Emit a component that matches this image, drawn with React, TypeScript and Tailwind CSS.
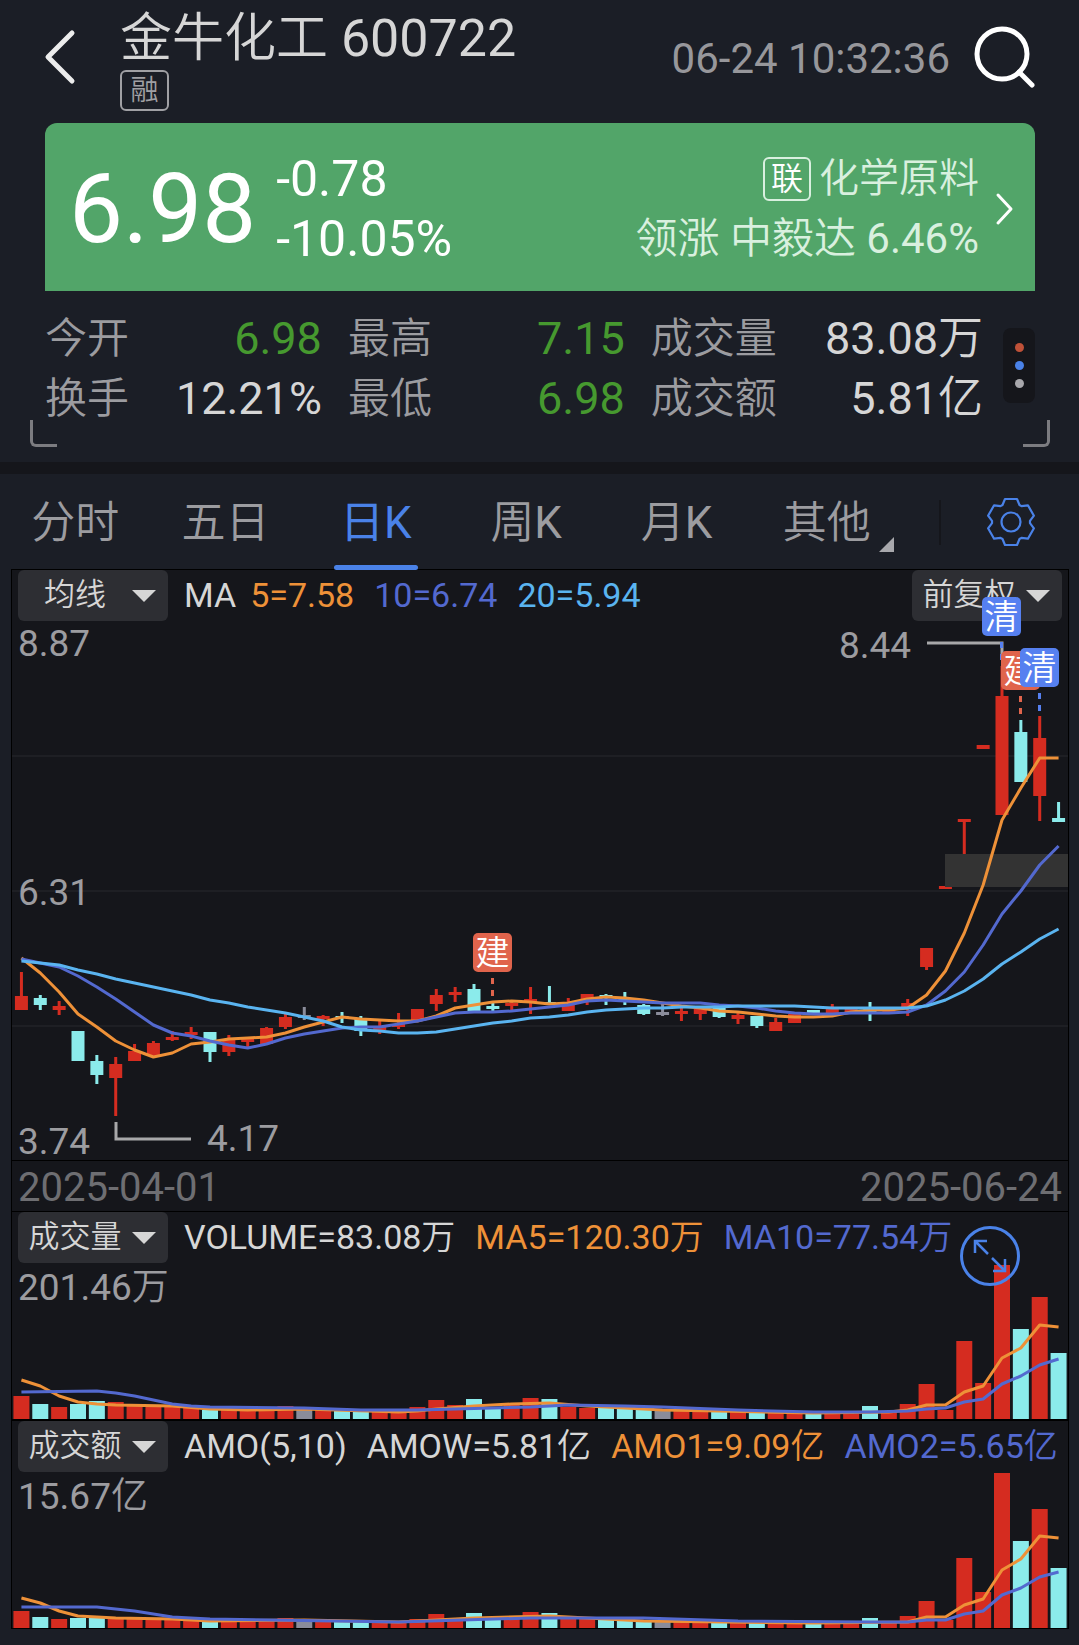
import React from 'react';

type Tone = 'up' | 'down' | 'flat';

const TONES: Record<string, Tone> = { r: 'up', c: 'down', g: 'flat' };

const TONE_FILL: Record<Tone, string> = {
  up: 'fill-[#d52c20]',
  down: 'fill-[#8bebeb]',
  flat: 'fill-[#8a8c9a]',
};

const CHART_WIDTH = 1056;
const COUNT = 56;
const STEP = CHART_WIDTH / COUNT;
const PRICE_TOP = 570;

const centerOf = (i: number) => (i + 0.5) * STEP;

// One letter per trading day: r = up, c = down, g = flat
const DAYS = 'rcrccrrrrrcrrrrgrccrrrrrccrrcrrcccgrrcrcrrcrrcrrrrrrrcrc';

// [high, body top, body bottom, low]
const CANDLES: [number, number, number, number][] = [
  [972, 996, 1010, 1010], [995, 998, 1005, 1010], [1001, 1006, 1010, 1015], [1031, 1031, 1061, 1061],
  [1055, 1061, 1075, 1084], [1057, 1064, 1078, 1116], [1044, 1051, 1061, 1061], [1041, 1043, 1056, 1058],
  [1031, 1037, 1040, 1041], [1027, 1032, 1035, 1039], [1032, 1032, 1052, 1062], [1035, 1039, 1052, 1056],
  [1039, 1039, 1042, 1047], [1027, 1028, 1044, 1044], [1014, 1017, 1027, 1029], [1007, 1015, 1018, 1020],
  [1015, 1016, 1019, 1026], [1012, 1016, 1018, 1023], [1016, 1019, 1031, 1036], [1021, 1027, 1030, 1034],
  [1013, 1024, 1027, 1029], [1009, 1009, 1020, 1020], [989, 995, 1004, 1011], [987, 992, 995, 1002],
  [984, 989, 1011, 1011], [1003, 1006, 1009, 1011], [1001, 1003, 1006, 1010], [987, 999, 1002, 1014],
  [986, 1002, 1004, 1004], [998, 1002, 1011, 1011], [994, 994, 999, 1005], [994, 995, 998, 1005],
  [992, 999, 1002, 1005], [1004, 1005, 1014, 1015], [1004, 1012, 1015, 1016], [1008, 1011, 1014, 1021],
  [1009, 1009, 1014, 1020], [1008, 1008, 1017, 1018], [1013, 1015, 1019, 1024], [1016, 1016, 1026, 1028],
  [1018, 1022, 1031, 1031], [1014, 1014, 1023, 1023], [1010, 1010, 1013, 1013], [1004, 1009, 1013, 1013],
  [1009, 1009, 1012, 1012], [1002, 1009, 1012, 1021], [1010, 1010, 1013, 1013], [999, 1003, 1008, 1016],
  [948, 948, 967, 970], [886, 886, 889, 889], [819, 819, 822, 855], [745, 745, 749, 749],
  [666, 696, 815, 815], [720, 732, 782, 782], [716, 738, 796, 821], [802, 818, 822, 822],
];

const MA5 = [
  958, 973, 992, 1014, 1027, 1041, 1050, 1057, 1053, 1044, 1042, 1039, 1038, 1037, 1033, 1027, 1022, 1017, 1019,
  1020, 1021, 1021, 1016, 1008, 1005, 1002, 1001, 1002, 1004, 1003, 999, 997, 998, 1000, 1003, 1006, 1008, 1011,
  1012, 1014, 1016, 1017, 1017, 1016, 1012, 1010, 1010, 1008, 995, 971, 933, 885, 820, 788, 758, 758,
];

const MA10 = [
  959, 963, 967, 976, 987, 999, 1012, 1025, 1033, 1036, 1041, 1045, 1048, 1044, 1038, 1034, 1031, 1028, 1027, 1027,
  1024, 1021, 1017, 1013, 1012, 1012, 1011, 1009, 1007, 1005, 1001, 1000, 1001, 1002, 1003, 1003, 1003, 1005, 1006,
  1008, 1011, 1013, 1014, 1014, 1013, 1013, 1013, 1012, 1005, 991, 972, 945, 914, 891, 865, 846,
];

const MA20 = [
  961, 963, 965, 970, 974, 979, 983, 987, 991, 995, 1000, 1003, 1007, 1010, 1013, 1017, 1021, 1027, 1030, 1031,
  1033, 1033, 1032, 1029, 1026, 1023, 1021, 1018, 1017, 1015, 1012, 1010, 1009, 1008, 1008, 1007, 1007, 1007, 1006,
  1006, 1006, 1006, 1007, 1008, 1008, 1008, 1008, 1008, 1006, 1000, 991, 979, 964, 952, 939, 929,
];

// Heights above the base line
const VOLUME = [
  23, 15, 12, 15, 18, 17, 13, 13, 12, 12, 9, 9, 9, 9, 13, 12, 9, 8, 8, 8, 8, 12, 19, 14, 20, 10, 16, 21, 20, 12, 11,
  12, 11, 10, 9, 9, 8, 7, 7, 6, 6, 6, 6, 5, 5, 13, 8, 15, 35, 9, 78, 36, 154, 90, 122, 66,
];
const VOLUME_MA5: [number, number][] = [
  [0, 39], [1, 33], [2, 23], [3, 17], [4, 15], [5, 14], [8, 13], [10, 10], [12, 9], [15, 10], [20, 7], [21, 8],
  [22, 10], [24, 13], [26, 15], [28, 16], [30, 13], [32, 11], [34, 9], [37, 8], [42, 6], [46, 7], [47, 9], [48, 14],
  [49, 14], [50, 27], [51, 33], [52, 61], [53, 71], [54, 94], [55, 92],
];
const VOLUME_MA10: [number, number][] = [
  [0, 27], [4, 28], [5, 26], [6, 23], [7, 19], [8, 15], [9, 13], [10, 12], [15, 11], [18, 9], [21, 9], [23, 10],
  [25, 11], [27, 12], [29, 14], [32, 13], [34, 12], [38, 9], [42, 7], [45, 7], [47, 8], [48, 10], [49, 11], [50, 17],
  [51, 20], [52, 35], [53, 43], [54, 54], [55, 60],
];

const AMOUNT = [
  17, 11, 9, 10, 12, 11, 9, 9, 9, 9, 7, 7, 7, 7, 10, 9, 7, 6, 6, 6, 6, 9, 14, 10, 15, 8, 12, 16, 15, 9, 9, 9, 8, 8,
  7, 7, 6, 5, 5, 5, 5, 5, 5, 4, 4, 10, 6, 12, 27, 8, 70, 36, 155, 87, 119, 60,
];
const AMOUNT_MA5: [number, number][] = [
  [0, 30], [1, 25], [2, 17], [3, 12], [4, 11], [5, 10], [8, 9], [10, 7], [15, 8], [20, 6], [22, 8], [24, 10],
  [28, 12], [31, 9], [33, 7], [42, 5], [47, 6], [48, 11], [49, 11], [50, 23], [51, 29], [52, 58], [53, 69], [54, 92],
  [55, 90],
];
const AMOUNT_MA10: [number, number][] = [
  [0, 21], [4, 21], [6, 17], [7, 14], [8, 11], [10, 9], [20, 6], [27, 10], [33, 10], [38, 7], [45, 6], [47, 6],
  [48, 8], [49, 8], [50, 14], [51, 17], [52, 33], [53, 40], [54, 51], [55, 56],
];

const STATS = [
  [
    { label: '今开', value: '6.98', green: true },
    { label: '换手', value: '12.21%', green: false },
  ],
  [
    { label: '最高', value: '7.15', green: true },
    { label: '最低', value: '6.98', green: true },
  ],
  [
    { label: '成交量', value: '83.08万', green: false },
    { label: '成交额', value: '5.81亿', green: false },
  ],
];

const TABS = ['分时', '五日', '日K', '周K', '月K', '其他'];

const linePoints = (values: number[]) => values.map((y, i) => `${centerOf(i)},${y - PRICE_TOP}`).join(' ');

const GEAR_POINTS = Array.from({ length: 6 })
  .flatMap((_, i) => {
    const a = (i * Math.PI) / 3;
    return [[-8.5, -17], [-6, -23], [6, -23], [8.5, -17]].map(
      ([x, y]) => `${25 + x * Math.cos(a) - y * Math.sin(a)},${25 + x * Math.sin(a) + y * Math.cos(a)}`
    );
  })
  .join(' ');

function PickList({ label, value }: { label: string; value: string }) {
  return (
    <div className="relative h-[51px] w-[150px] shrink-0">
      <select
        aria-label={label}
        className="h-full w-full appearance-none rounded-md bg-[#2d2e33] pr-9 text-center text-[31px] text-[#d6d6d6] outline-none"
      >
        <option>{value}</option>
      </select>
      <svg viewBox="0 0 24 12" className="pointer-events-none absolute right-3 top-5 h-3 w-6">
        <path d="M0 0H24L12 12Z" className="fill-[#d6d6d6]" />
      </svg>
    </div>
  );
}

function Marker({ x, y, text, sell }: { x: number; y: number; text: string; sell?: boolean }) {
  return (
    <g>
      <rect x={x} y={y} width={39} height={39} rx={5} className={sell ? 'fill-[#5680f0]' : 'fill-[#e0644c]'} />
      <text x={x + 19.5} y={y + 32} textAnchor="middle" className="fill-white text-[34px]">
        {text}
      </text>
      <path
        d={`M${x + 19.5} ${y + 45}v6m0 6v6`}
        strokeWidth={3}
        className={sell ? 'stroke-[#5680f0]' : 'stroke-[#e0644c]'}
      />
    </g>
  );
}

function PriceChart() {
  return (
    <svg
      viewBox={`0 51 ${CHART_WIDTH} 539`}
      className="pointer-events-none relative block w-full overflow-visible"
      role="img"
      aria-label="日K"
    >
      <path d={`M0 186H${CHART_WIDTH}M0 321H${CHART_WIDTH}M0 456H${CHART_WIDTH}`} strokeWidth={2} className="stroke-[#1e1f24]" />
      {CANDLES.map(([high, top, bottom, low], i) => (
        <g key={i} className={TONE_FILL[TONES[DAYS[i]]]}>
          <rect x={centerOf(i) - 1.5} y={high - PRICE_TOP} width={3} height={low - high} />
          <rect x={centerOf(i) - 6.5} y={top - PRICE_TOP} width={13} height={bottom - top} />
        </g>
      ))}
      <rect x={933} y={284} width={123} height={33} className="fill-[#333333]" />
      <g fill="none" strokeWidth={3} strokeLinejoin="round">
        <polyline points={linePoints(MA5)} className="stroke-[#ee9138]" />
        <polyline points={linePoints(MA10)} className="stroke-[#5369cf]" />
        <polyline points={linePoints(MA20)} className="stroke-[#5ab4f0]" />
      </g>
      <g fill="none" strokeWidth={3} className="stroke-[#a8a8aa]">
        <path d="M104 552V569H179" />
        <path d="M915 73H990V90" />
      </g>
      <g className="fill-[#9c9ca0] text-[37px]">
        <text x={6} y={86}>8.87</text>
        <text x={6} y={335}>6.31</text>
        <text x={6} y={584}>3.74</text>
        <text x={195} y={581}>4.17</text>
        <text x={827} y={88}>8.44</text>
      </g>
      <Marker x={461} y={363} text="建" />
      <Marker x={970} y={27} text="清" sell />
      <Marker x={989} y={81} text="建" />
      <Marker x={1008} y={78} text="清" sell />
    </svg>
  );
}

interface BarChartProps {
  bars: number[];
  short: [number, number][];
  long: [number, number][];
  max: string;
  label: string;
}

function BarChart({ bars, short, long, max, label }: BarChartProps) {
  const toPoints = (line: [number, number][]) => line.map(([i, h]) => `${centerOf(i)},${156 - h}`).join(' ');
  return (
    <svg viewBox={`0 0 ${CHART_WIDTH} 156`} className="block w-full" role="img" aria-label={label}>
      {bars.map((h, i) => (
        <rect key={i} x={centerOf(i) - 8} y={156 - h} width={16} height={h} className={TONE_FILL[TONES[DAYS[i]]]} />
      ))}
      <g fill="none" strokeWidth={3} strokeLinejoin="round">
        <polyline points={toPoints(short)} className="stroke-[#ee9138]" />
        <polyline points={toPoints(long)} className="stroke-[#5369cf]" />
      </g>
      <text x={6} y={37} className="fill-[#9c9ca0] text-[37px]">{max}</text>
    </svg>
  );
}

export default function App() {
  return (
    <main className="min-h-screen bg-[#1b1e26] pb-4 font-['Roboto','Noto_Sans_CJK_SC_DemiLight','Noto_Sans_CJK_SC',sans-serif] text-[#d6d6d6]">
      {/* Title bar */}
      <header className="mb-[10px] flex h-[113px] items-center pl-11 pr-[43px]">
        <button aria-label="返回" className="shrink-0">
          <svg viewBox="0 0 32 56" className="h-14 w-8" fill="none">
            <path d="M28 4L4 28L28 52" strokeWidth={5} strokeLinecap="round" strokeLinejoin="round" className="stroke-[#ececec]" />
          </svg>
        </button>
        <div className="ml-11 flex flex-col items-start pt-1.5">
          <h1 className="text-[52px] leading-[62px]">金牛化工 600722</h1>
          <span className="flex h-[41px] w-[49px] items-center justify-center rounded-md border-2 border-[#a0a0a4] text-[28px] leading-none text-[#a0a0a4]">
            融
          </span>
        </div>
        <time className="ml-auto mr-6 mt-1 text-[42px] leading-none text-[#97979b]">06-24 10:32:36</time>
        <button aria-label="搜索" className="shrink-0">
          <svg viewBox="0 0 62 62" className="size-[62px]" fill="none">
            <circle cx="28" cy="28" r="25" strokeWidth={5} className="stroke-white" />
            <path d="M45 46L58 59" strokeWidth={5} strokeLinecap="round" className="stroke-white" />
          </svg>
        </button>
      </header>

      {/* Quote */}
      <section className="ml-[45px] mr-11 flex h-[168px] items-center rounded-t-xl bg-[#52a569] pl-6 pr-5 pt-1 text-white">
        <div className="text-[96px] leading-none">6.98</div>
        <div className="ml-5 text-[50px] leading-[60px]">
          <div>-0.78</div>
          <div>-10.05%</div>
        </div>
        <a href="#industry" className="ml-auto flex items-center gap-4 text-[40px] leading-[60px] text-[#d9f0df]">
          <span className="flex flex-col items-end">
            <span className="flex items-center gap-2">
              <span className="flex h-[44px] w-12 items-center justify-center rounded-md border-2 border-[#d9f0df] text-[32px] leading-none text-white">
                联
              </span>
              化学原料
            </span>
            <span className="text-[42px]">领涨 中毅达 6.46%</span>
          </span>
          <svg viewBox="0 0 20 34" className="h-[34px] w-5" fill="none">
            <path d="M3 3L16 17L3 31" strokeWidth={3} strokeLinecap="round" strokeLinejoin="round" className="stroke-white" />
          </svg>
        </a>
      </section>

      <section className="relative flex h-[171px] items-start gap-5 pl-[45px] pr-11 pt-[18px]">
        <div className="grid flex-1 grid-cols-[5fr_5fr_6fr] gap-x-[26px]">
          {STATS.map((column, ci) => (
            <dl key={ci}>
              {column.map(item => (
                <div key={item.label} className="flex justify-between leading-[60px]">
                  <dt className="text-[42px] text-[#9c9ca0]">{item.label}</dt>
                  <dd className={`text-[45px] ${item.green ? 'text-[#46992f]' : 'text-[#d6d6d6]'}`}>{item.value}</dd>
                </div>
              ))}
            </dl>
          ))}
        </div>
        <button aria-label="更多" className="mt-[19px] flex h-[75px] w-8 flex-col items-center justify-center gap-[9px] rounded-lg bg-[#15161b]">
          <span className="size-[9px] rounded-full bg-[#bf5138]" />
          <span className="size-[9px] rounded-full bg-[#4a82e8]" />
          <span className="size-[9px] rounded-full bg-[#a8a8ac]" />
        </button>
        <span className="absolute bottom-[15px] left-[30px] h-[27px] w-[27px] rounded-bl-md border-b-3 border-l-3 border-[#7c7c80]" />
        <span className="absolute bottom-[15px] right-[29px] h-[27px] w-[27px] rounded-br-md border-b-3 border-r-3 border-[#7c7c80]" />
      </section>

      <div className="h-3 bg-[#15161b]" />

      {/* Period tabs */}
      <nav className="flex h-24 items-center">
        <div role="tablist" className="grid h-full w-[83.6%] grid-cols-6">
          {TABS.map(tab => {
            const active = tab === '日K';
            return (
              <button
                key={tab}
                role="tab"
                aria-selected={active}
                className={`relative flex items-center justify-center pt-0.5 text-[44px] ${
                  active ? "font-['Roboto','Noto_Sans_CJK_SC',sans-serif] text-[#4a82e8]" : 'text-[#9c9ca0]'
                }`}
              >
                {tab}
                {active && <span className="absolute bottom-0 h-[5px] w-[84px] rounded-full bg-[#4a82e8]" />}
                {tab === '其他' && (
                  <svg viewBox="0 0 15 15" className="absolute bottom-[18px] right-2 size-[15px]">
                    <path d="M15 0V15H0Z" className="fill-[#a8a8ac]" />
                  </svg>
                )}
              </button>
            );
          })}
        </div>
        <div className="ml-auto h-[45px] w-0.5 bg-[#15161b]" />
        <button aria-label="设置" className="ml-[45px] mr-[43px]">
          <svg viewBox="0 0 50 50" className="size-[50px] stroke-[#4a82e8]" fill="none" strokeWidth={2.2}>
            <polygon points={GEAR_POINTS} strokeLinejoin="round" />
            <circle cx="25" cy="25" r="9.5" />
          </svg>
        </button>
      </nav>

      {/* Charts */}
      <div className="pl-3 pr-[11px]">
        <div className="bg-[#15161b] outline-1 outline-black">
          <section>
            <div className="flex h-[51px] items-center px-1.5">
              <PickList label="指标" value="均线" />
              <div className="ml-4 flex whitespace-nowrap text-[34px]">
                <span>MA</span>
                <span className="ml-3.5 text-[#ee9138]">5=7.58</span>
                <span className="ml-5 text-[#5369cf]">10=6.74</span>
                <span className="ml-5 text-[#5ab4f0]">20=5.94</span>
              </div>
              <div className="ml-auto">
                <PickList label="复权" value="前复权" />
              </div>
            </div>
            <PriceChart />
          </section>

          <div className="flex h-[52px] items-center justify-between border-y border-black px-1.5 pt-1 text-[40px] leading-none text-[#6e6e72]">
            <time>2025-04-01</time>
            <time>2025-06-24</time>
          </div>

          <section className="relative border-b-2 border-black">
            <div className="flex h-[51px] items-center px-1.5">
              <PickList label="副图一" value="成交量" />
              <div className="ml-4 flex gap-5 whitespace-nowrap text-[34px]">
                <span>VOLUME=83.08万</span>
                <span className="text-[#ee9138]">MA5=120.30万</span>
                <span className="text-[#5369cf]">MA10=77.54万</span>
              </div>
            </div>
            <BarChart bars={VOLUME} short={VOLUME_MA5} long={VOLUME_MA10} max="201.46万" label="成交量" />
            <button aria-label="全屏" className="absolute right-12 top-[14px]">
              <svg viewBox="0 0 60 60" className="size-[60px] stroke-[#4a82e8]" fill="none" strokeWidth={3}>
                <circle cx="30" cy="30" r="28.5" />
                <path d="M15 27V15H27M15 15L28 28M32 32L45 45M33 45H45V33" strokeWidth={2.5} />
              </svg>
            </button>
          </section>

          <section>
            <div className="flex h-[51px] items-center px-1.5">
              <PickList label="副图二" value="成交额" />
              <div className="ml-4 flex gap-5 whitespace-nowrap text-[34px]">
                <span>AMO(5,10)</span>
                <span>AMOW=5.81亿</span>
                <span className="text-[#ee9138]">AMO1=9.09亿</span>
                <span className="text-[#5369cf]">AMO2=5.65亿</span>
              </div>
            </div>
            <BarChart bars={AMOUNT} short={AMOUNT_MA5} long={AMOUNT_MA10} max="15.67亿" label="成交额" />
          </section>
        </div>
      </div>
    </main>
  );
}
